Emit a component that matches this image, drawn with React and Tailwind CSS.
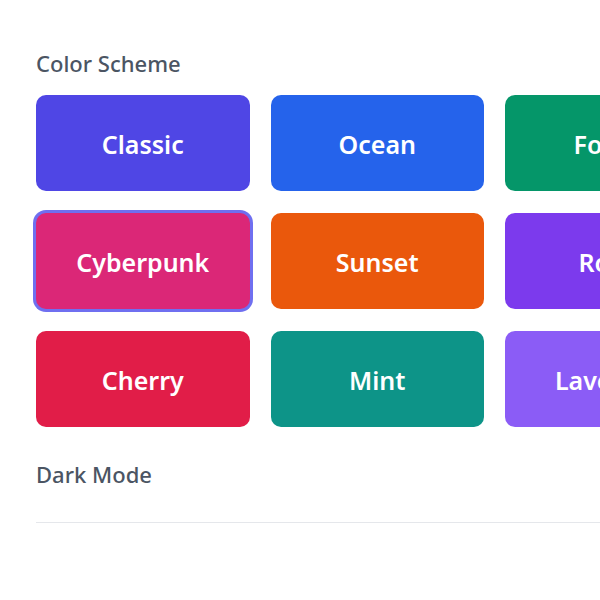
import React, { useState } from 'react';

const schemes = [
  { name: 'Classic', bg: 'bg-[#4f46e5]' },
  { name: 'Ocean', bg: 'bg-[#2563eb]' },
  { name: 'Forest', bg: 'bg-[#059669]' },
  { name: 'Cyberpunk', bg: 'bg-[#db2777]' },
  { name: 'Sunset', bg: 'bg-[#ea580c]' },
  { name: 'Royal', bg: 'bg-[#7c3aed]' },
  { name: 'Cherry', bg: 'bg-[#e11d48]' },
  { name: 'Mint', bg: 'bg-[#0d9488]' },
  { name: 'Lavender', bg: 'bg-[#8b5cf6]' },
];

const App = () => {
  const [selected, setSelected] = useState('Cyberpunk');

  return (
    <div
      className="w-[600px] h-[600px] overflow-hidden bg-white"
      style={{ fontFamily: '"Noto Sans", "Open Sans", sans-serif' }}
    >
      <div className="w-[800px] pt-[48px] pl-[36px]">
        {/* Color scheme */}
        <h3 className="text-[22px] leading-[30px] font-medium text-[#4b5563] mb-[17px]">Color Scheme</h3>
        <div className="grid grid-cols-[213.5px_213.5px_213.5px] gap-x-[21px] gap-y-[22px]">
          {schemes.map((s) => (
            <button
              key={s.name}
              onClick={() => setSelected(s.name)}
              className={`h-24 pt-[3px] rounded-[10px] ${s.bg} text-white text-[25px] font-semibold flex items-center justify-center ${
                selected === s.name ? 'ring-[3px] ring-[#6f6ff0]' : ''
              }`}
            >
              {s.name}
            </button>
          ))}
        </div>

        {/* Dark mode */}
        <div className="mt-[32px] pb-[33px] border-b border-[#e5e7eb]">
          <h3 className="text-[22px] leading-[30px] font-medium text-[#4b5563]">Dark Mode</h3>
        </div>
      </div>
    </div>
  );
};

export default App;
